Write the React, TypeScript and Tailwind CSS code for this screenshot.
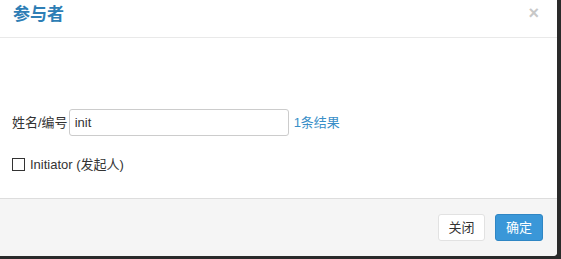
export default function App() {
  return (
    <div className="w-[561px] h-[259px] bg-[#2a2a2a] overflow-hidden" style={{ fontFamily: '"Liberation Sans", "Noto Sans CJK SC", sans-serif' }}>
      <div className="w-[557px] h-[256px] bg-white flex flex-col rounded-br-[4px] overflow-hidden">
        <div className="h-[38px] border-b border-[#e9e9e9] flex items-center justify-between pl-[13px] pr-[18px] shrink-0">
          <span className="text-[17px] font-bold text-[#2e7eb5] leading-none pb-[8px]">参与者</span>
          <span className="text-[18px] font-bold text-[#c8c8c8] leading-none pb-[12px]">×</span>
        </div>
        <div className="flex-1 flex flex-col pl-[12px]">
          <div className="flex items-center mt-[71px] h-[27px]">
            <span className="text-[13px] text-[#333]">姓名/编号</span>
            <input
              className="ml-px w-[220px] h-[27px] border border-[#cccccc] rounded-[3px] px-[5px] text-[13px] text-[#333] outline-none"
              defaultValue="init"
            />
            <span className="ml-[5px] text-[13px] text-[#3a8fc8]">1条结果</span>
          </div>
          <div className="flex items-center mt-[19px]">
            <span className="w-[13px] h-[13px] border border-[#333] bg-white"></span>
            <span className="ml-[5px] text-[13px] text-[#333]">Initiator (发起人)</span>
          </div>
        </div>
        <div className="h-[58px] shrink-0 bg-[#f5f5f5] border-t border-[#dddddd] flex items-center justify-end gap-[10px] pr-[14px]">
          <button className="w-[47px] h-[27px] bg-white border border-[#e2e2e2] rounded-[3px] text-[13px] text-[#333]">关闭</button>
          <button className="w-[48px] h-[27px] bg-[#3a97d8] border border-[#2f86c4] rounded-[3px] text-[13px] text-white">确定</button>
        </div>
      </div>
    </div>
  );
}
